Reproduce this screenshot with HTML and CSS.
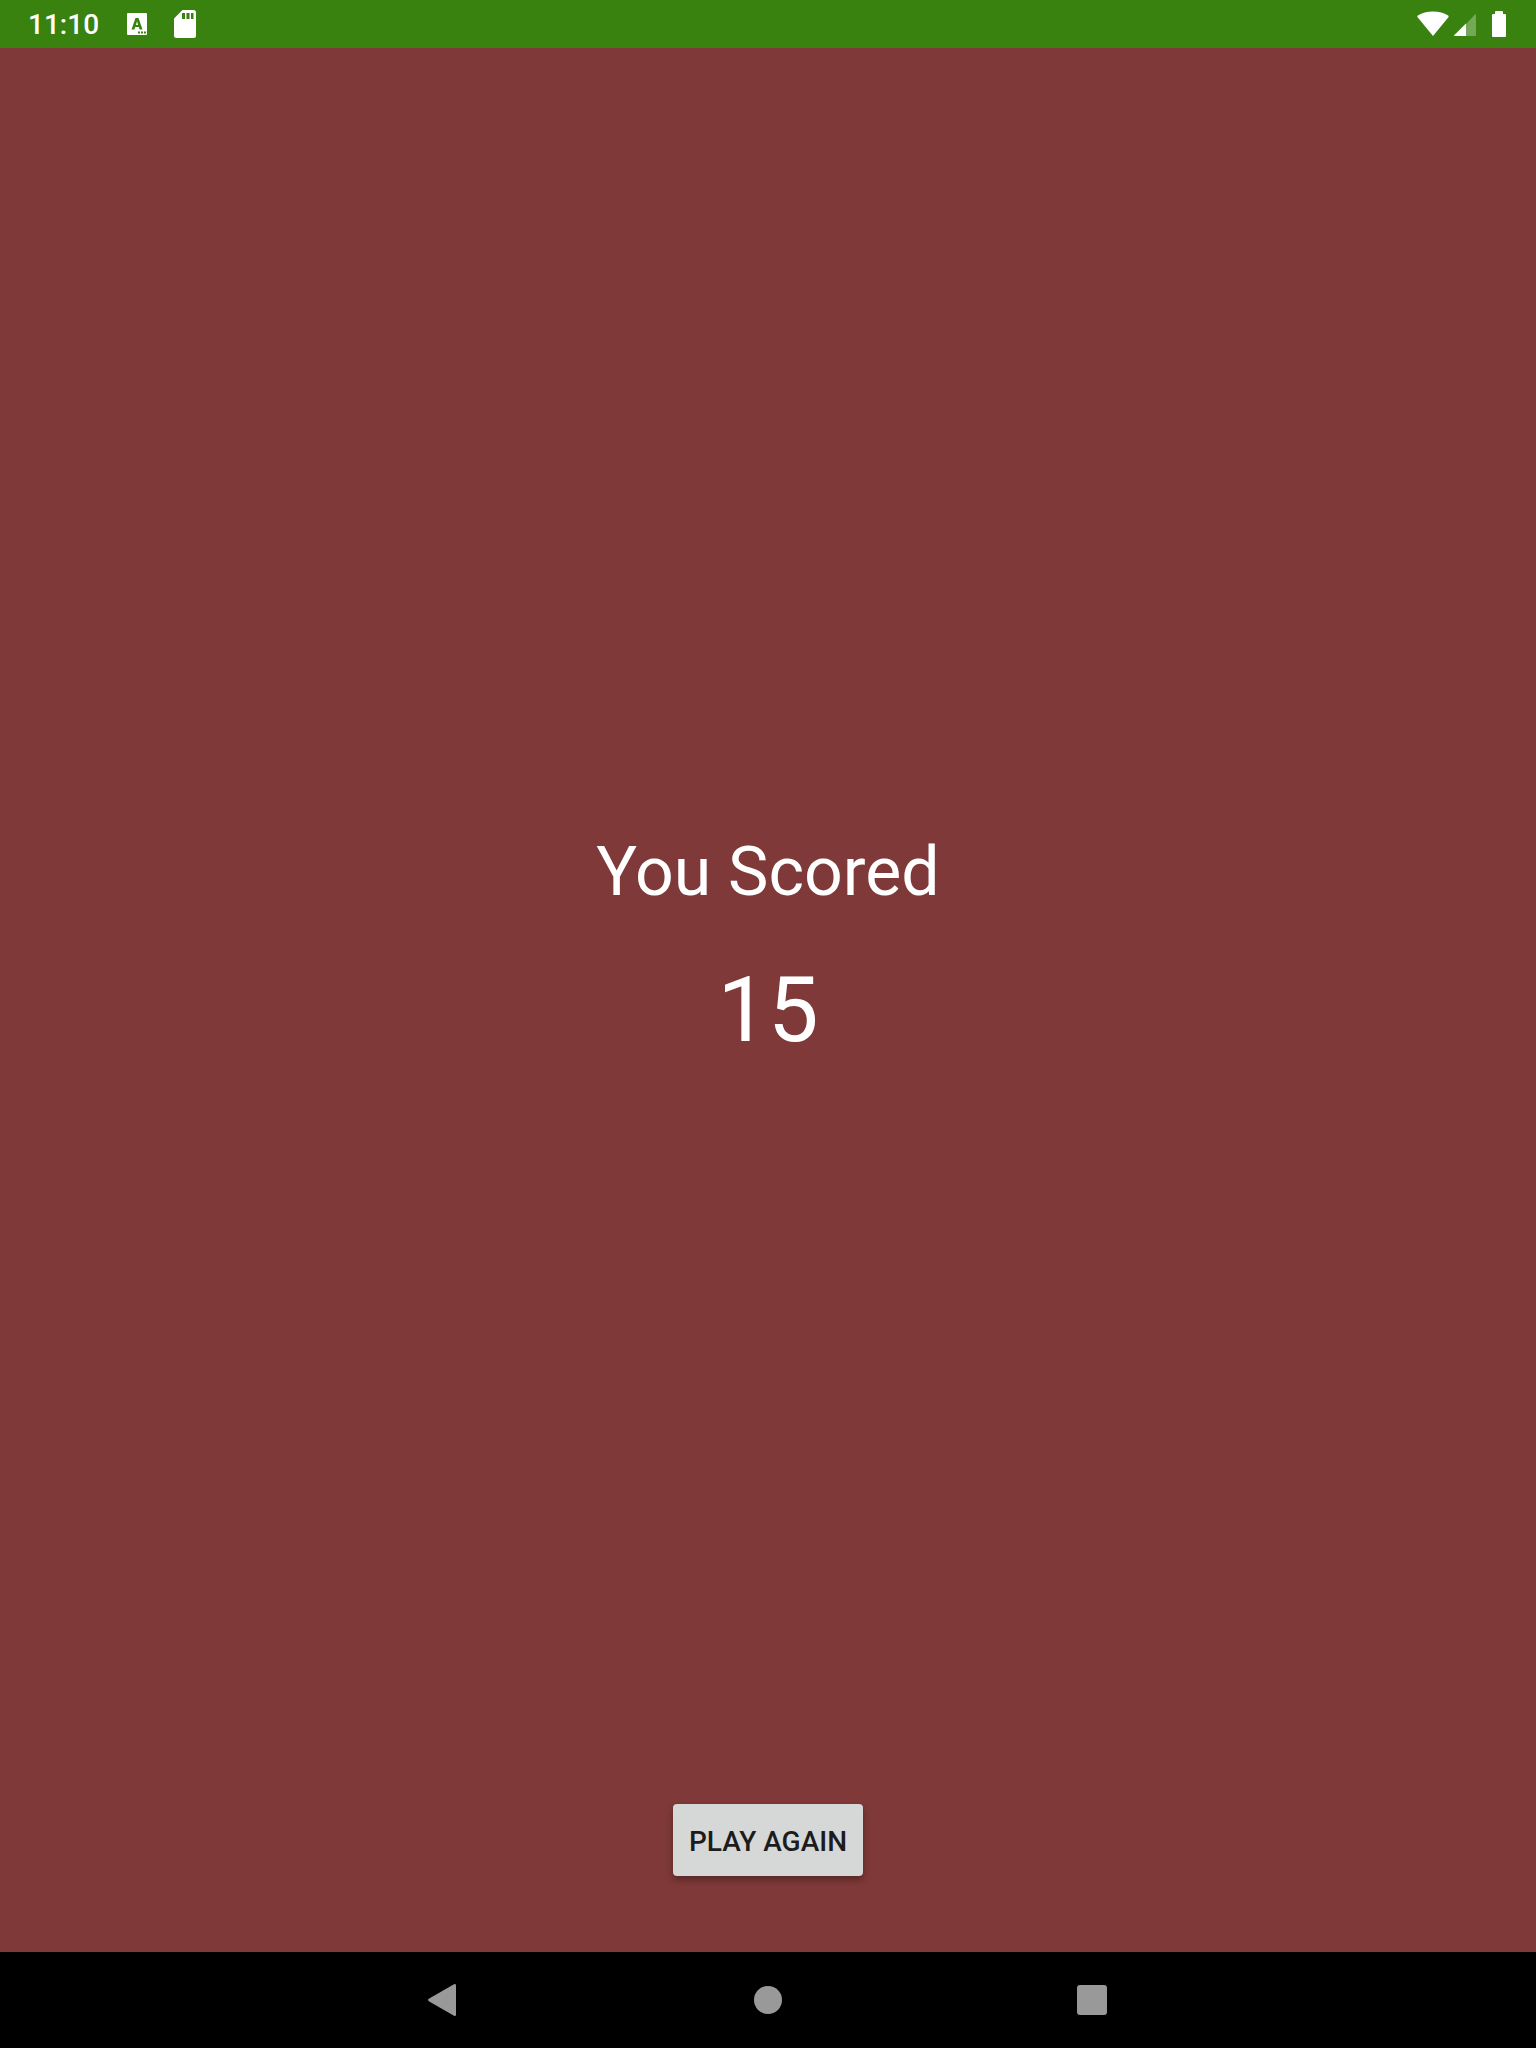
FILE: index.html
```html
<!DOCTYPE html>
<html lang="en">
<head>
  <meta charset="utf-8">
  <meta name="viewport" content="width=device-width, initial-scale=1">
  <title>You Scored</title>
  <link rel="stylesheet" href="styles.css">
</head>
<body>
  <header class="status-bar">
    <div class="status-left">
      <time class="clock">11:10</time>
      <svg class="icon-keyboard" width="20" height="22" viewBox="0 0 20 22" aria-hidden="true">
        <path fill="#fff" d="M1 0h18a1 1 0 0 1 1 1v20a1 1 0 0 1-1 1H1a1 1 0 0 1-1-1V1a1 1 0 0 1 1-1z"/>
        <path class="cutout" fill-rule="evenodd" d="M8.500 5h3l4 11.500h-2.900l-.8-2.500H8.200l-.8 2.500H4.500zM10 8.300L8.900 12h2.200z"/>
        <path class="cutout" d="M11 18.500h2v2h-2zM14 18.500h2v2h-2zM17 18.500h2v2h-2z"/>
      </svg>
      <svg class="icon-card" width="22" height="28" viewBox="0 0 22 28" aria-hidden="true">
        <path fill="#fff" d="M8.500 0H19.500A2.500 2.500 0 0 1 22 2.500V25.500A2.500 2.500 0 0 1 19.500 28H2.500A2.500 2.500 0 0 1 0 25.500V8.500z"/>
        <path class="cutout" d="M8 3h3v6H8zM12.500 3h3v6h-3zM17 3h2.500v6H17z"/>
      </svg>
    </div>
    <div class="status-right">
      <svg width="32" height="26" viewBox="0 0 32 26" aria-hidden="true">
        <path fill="#fff" d="M16 25L.6 6.200C.2 5.700.3 5 .9 4.600 5 1.800 10 .5 16 .5s11 1.300 15.100 4.100c.6.400.7 1.100.3 1.600z"/>
      </svg>
      <svg class="icon-signal" width="22" height="22" viewBox="0 0 22 22" aria-hidden="true">
        <path fill="#fff" fill-opacity=".3" d="M12 10L21 .6Q22-.2 22 1V21a1 1 0 0 1-1 1H12z"/>
        <path fill="#fff" d="M12 9.500V22H.8Q-.4 22 .4 21z"/>
      </svg>
      <svg class="icon-battery" width="14" height="26" viewBox="0 0 14 26" aria-hidden="true">
        <path fill="#fff" d="M4 0h6a1 1 0 0 1 1 1v2h2a1 1 0 0 1 1 1v21a1 1 0 0 1-1 1H1a1 1 0 0 1-1-1V4a1 1 0 0 1 1-1h2V1a1 1 0 0 1 1-1z"/>
      </svg>
    </div>
  </header>

  <main class="result">
    <div class="score">
      <h1 class="score-label">You Scored</h1>
      <p class="score-value">15</p>
    </div>
    <button class="play-again" type="button">PLAY AGAIN</button>
  </main>

  <nav class="nav-bar" aria-label="System">
    <button class="nav-button" type="button" aria-label="Back">
      <svg width="32" height="32" viewBox="0 0 32 32" aria-hidden="true">
        <path d="M26 .3Q28-.7 28 1.500V30.500Q28 32.700 26 31.700L.8 17.200Q-.6 16 .8 14.800z"/>
      </svg>
    </button>
    <button class="nav-button" type="button" aria-label="Home">
      <svg width="32" height="32" viewBox="0 0 32 32" aria-hidden="true">
        <circle cx="16" cy="16" r="14"/>
      </svg>
    </button>
    <button class="nav-button" type="button" aria-label="Recent apps">
      <svg width="32" height="32" viewBox="0 0 32 32" aria-hidden="true">
        <rect x="1" y="1" width="30" height="30" rx="3"/>
      </svg>
    </button>
  </nav>
</body>
</html>
```
FILE: styles.css
```css
* {
  box-sizing: border-box;
}

body {
  display: flex;
  flex-direction: column;
  min-height: 100vh;
  margin: 0;
  background: #7e3938;
  color: #fff;
  font-family: Roboto, "Liberation Sans", sans-serif;
}

svg {
  display: block;
  flex: none;
}

.status-bar {
  display: flex;
  align-items: center;
  justify-content: space-between;
  height: 48px;
  padding: 0 30px 0 28px;
  background: #39820f;
}

.status-left,
.status-right {
  display: flex;
  align-items: center;
}

.clock {
  padding-top: 2px;
  font-size: 28px;
  font-weight: 500;
  line-height: 46px;
}

.icon-keyboard {
  margin-left: 28px;
}

.icon-card {
  margin-left: 27px;
}

.cutout {
  fill: #39820f;
}

.icon-signal {
  margin: 2px 0 0 5px;
}

.icon-battery {
  margin-left: 16px;
}

.result {
  display: flex;
  flex: 1;
  flex-direction: column;
  align-items: center;
  padding-bottom: 76px;
}

.score {
  display: flex;
  flex: 1;
  flex-direction: column;
  align-items: center;
  justify-content: center;
  gap: 46px;
  padding-top: 44px;
}

.score-label,
.score-value {
  margin: 0;
  font-weight: 400;
}

.score-label {
  font-size: 68px;
  line-height: 80px;
}

.score-value {
  font-size: 90px;
  line-height: 106px;
}

.play-again {
  height: 72px;
  padding: 4px 16px 0;
  border: 0;
  border-radius: 4px;
  background: #d6d8d7;
  box-shadow: 0 4px 6px rgba(0, 0, 0, 0.3);
  color: #1c1c1c;
  font: 500 28px/32px Roboto, "Liberation Sans", sans-serif;
}

.nav-bar {
  display: flex;
  align-items: center;
  justify-content: center;
  gap: 164px;
  height: 96px;
  background: #000;
}

.nav-button {
  display: flex;
  align-items: center;
  justify-content: center;
  width: 160px;
  height: 96px;
  padding: 0;
  border: 0;
  background: none;
  fill: #999;
}
```
